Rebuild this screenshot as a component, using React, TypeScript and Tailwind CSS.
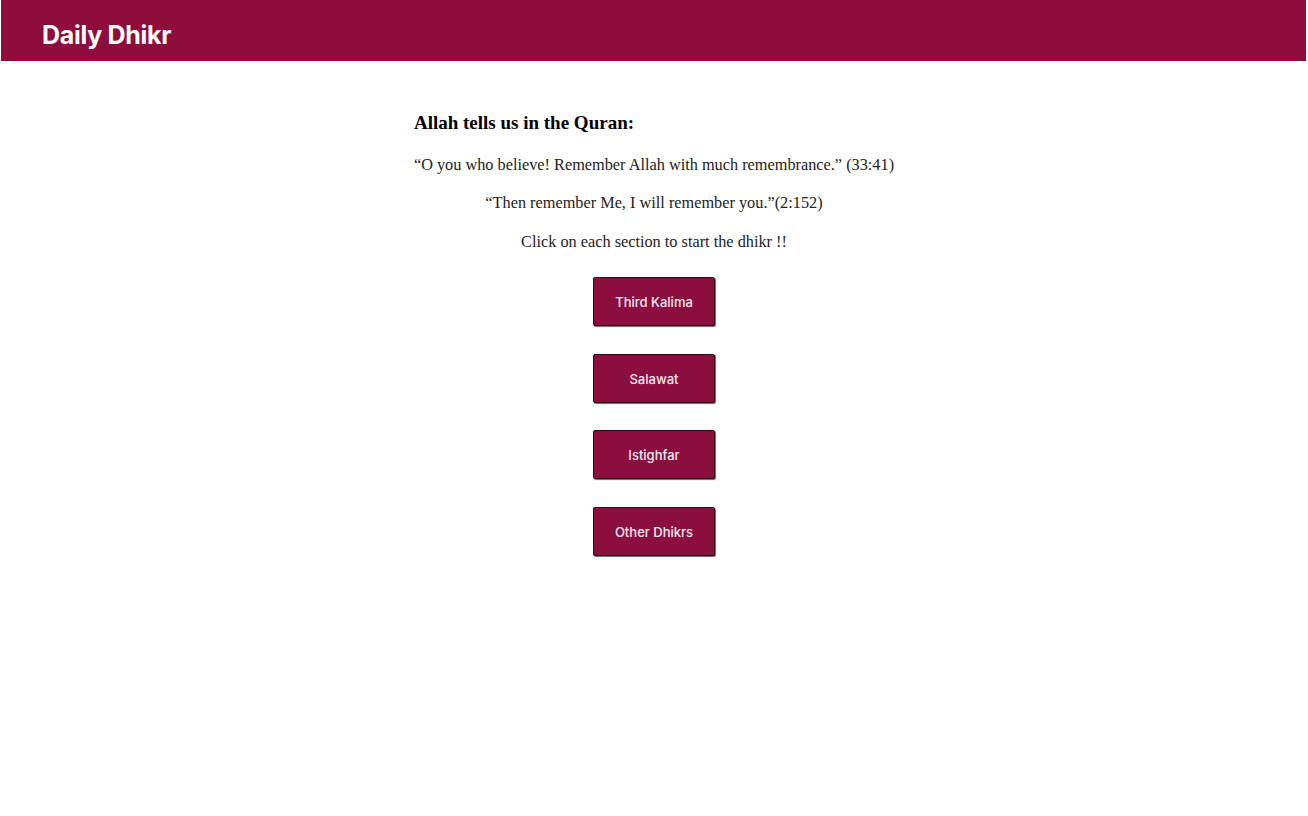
import React from "react";

const buttons = ["Third Kalima", "Salawat", "Istighfar", "Other Dhikrs"];

export default function App() {
  return (
    <div className="min-h-[816px] bg-white">
      <header className="ml-[1px] mr-[2px] h-[61px] bg-[#8e0d3c] flex items-center pl-[41px] pt-[9px]">
        <h1
          className="text-white text-[25px] leading-[30px] font-bold tracking-[-0.3px]"
          style={{ fontFamily: "Inter, 'Noto Sans', sans-serif" }}
        >
          Daily Dhikr
        </h1>
      </header>
      <main
        className="flex justify-center mt-[51px]"
        style={{ fontFamily: "'Liberation Serif', 'Times New Roman', serif" }}
      >
        <div className="flex flex-col items-center text-[#222]">
          <h2 className="self-start text-[19px] leading-[22px] font-bold text-black">
            Allah tells us in the Quran:
          </h2>
          <p className="mt-[20px] text-[16.3px] leading-[21px]">
            “O you who believe! Remember Allah with much remembrance.” (33:41)
          </p>
          <p className="mt-[17px] text-[16.3px] leading-[21px]">
            “Then remember Me, I will remember you.”(2:152)
          </p>
          <p className="mt-[18px] text-[16.3px] leading-[21px]">
            Click on each section to start the dhikr !!
          </p>
          <div className="mt-[25px] flex flex-col items-center gap-[27.5px]">
            {buttons.map((b) => (
              <button
                key={b}
                className="w-[122px] h-[49px] pt-[3px] bg-[#8c0e3e] text-[#fde8f0] text-[13px] font-medium border border-[#2a0a14] rounded-[2px] shadow-[1px_1px_1px_rgba(0,0,0,0.6)]"
                style={{ fontFamily: "Inter, 'Noto Sans', sans-serif" }}
              >
                {b}
              </button>
            ))}
          </div>
        </div>
      </main>
    </div>
  );
}
